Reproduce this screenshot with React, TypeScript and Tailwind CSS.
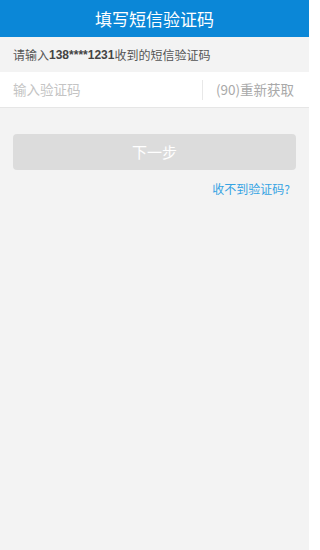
import React from "react";

const font = { fontFamily: '"Noto Sans CJK SC", "Noto Sans", sans-serif' };

export default function App() {
  return (
    <div className="w-[309px] h-[550px] bg-[#f3f3f3] flex flex-col" style={font}>
      <div className="h-[37px] bg-[#0b87d7] flex items-center justify-center text-white text-[17px] leading-none">
        填写短信验证码
      </div>
      <div className="h-[35px] flex items-center px-[13px] text-[12px] text-[#555]">
        请输入<span className="font-bold text-[#444] font-['Liberation_Sans',sans-serif]">138****1231</span>收到的短信验证码
      </div>
      <div className="h-[36px] bg-white border-b border-[#e6e6e6] flex items-center">
        <div className="flex-1 pl-[13px] text-[13.5px] text-[#c4c4c4]">输入验证码</div>
        <div className="w-px h-[20px] bg-[#e8e8e8]"></div>
        <div className="w-[106px] pl-[13px] text-[13.5px] text-[#a9a9a9]">(90)重新获取</div>
      </div>
      <div className="px-[13px] pt-[26px] flex flex-col">
        <button className="h-[36px] rounded-[4px] bg-[#dcdcdc] text-white text-[15px]">下一步</button>
        <div className="flex justify-end pr-[6px] pt-[10px] text-[12px] text-[#35a3e3]">收不到验证码?</div>
      </div>
    </div>
  );
}
